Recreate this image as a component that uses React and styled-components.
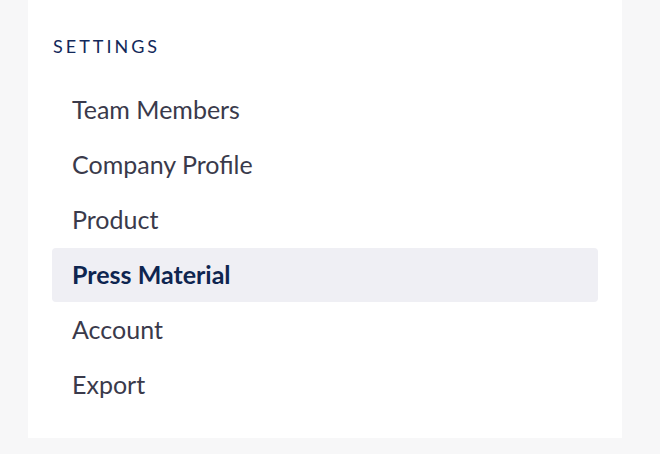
import styled, { createGlobalStyle } from "styled-components";

const GlobalStyle = createGlobalStyle`
    body {
        margin: 0;
        background: #f7f7f8;
        font-family: Lato, "Noto Sans", sans-serif;
    }
`;

const Page = styled.div`
    padding: 0 38px 16px 28px;
`;

const Panel = styled.nav`
    background: #ffffff;
    padding: 34px 24px 26px;
`;

const Heading = styled.h3`
    margin: 0 0 25px 1px;
    font-size: 18px;
    font-weight: 400;
    line-height: 24px;
    letter-spacing: 3px;
    color: #12285a;
`;

const List = styled.ul`
    list-style: none;
    margin: 0;
    padding: 0;
    display: flex;
    flex-direction: column;
    gap: 1px;
`;

const Item = styled.li`
    display: flex;
    align-items: center;
    height: 54px;
    padding: 0 20px 3px;
    box-sizing: border-box;
    border-radius: 4px;
    font-size: 25px;
    font-weight: ${(p) => (p.$active ? 700 : 400)};
    color: ${(p) => (p.$active ? "#0e2550" : "#3a3a4b")};
    background: ${(p) => (p.$active ? "#efeff4" : "transparent")};
    cursor: pointer;
`;

const items = [
    "Team Members",
    "Company Profile",
    "Product",
    "Press Material",
    "Account",
    "Export",
];

const App = () => {
    const active = "Press Material";

    return (
        <>
            <GlobalStyle />
            <Page>
                <Panel>
                    <Heading>SETTINGS</Heading>
                    <List>
                        {items.map((name) => (
                            <Item key={name} $active={name === active}>
                                {name}
                            </Item>
                        ))}
                    </List>
                </Panel>
            </Page>
        </>
    );
};

export default App;
